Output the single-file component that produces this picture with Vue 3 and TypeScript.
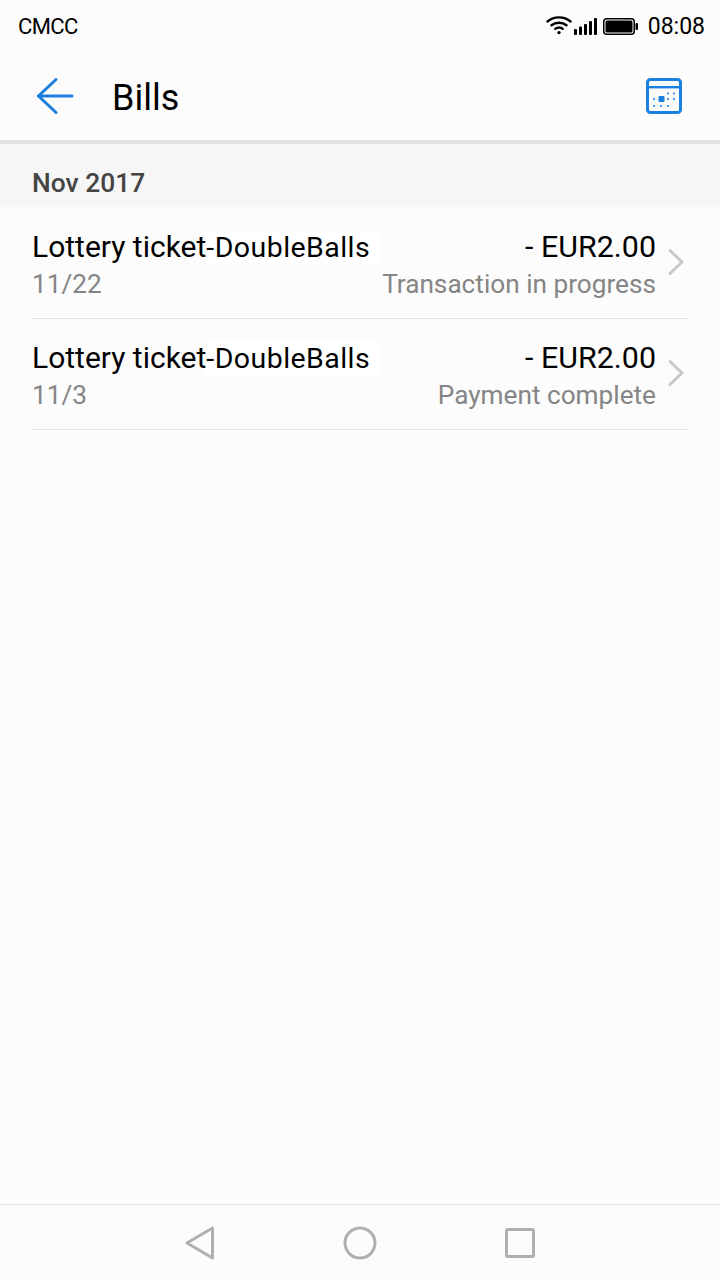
<script setup lang="ts">
interface Bill {
  name: string
  suffix: string
  date: string
  amount: string
  status: string
}

const bills: Bill[] = [
  { name: 'Lottery ticket', suffix: '-DoubleBalls', date: '11/22', amount: '- EUR2.00', status: 'Transaction in progress' },
  { name: 'Lottery ticket', suffix: '-DoubleBalls', date: '11/3', amount: '- EUR2.00', status: 'Payment complete' }
]
</script>

<template>
  <div class="screen">
    <div class="status-bar">
      <span class="carrier">CMCC</span>
      <div class="status-right">
        <svg class="wifi" width="26" height="20" viewBox="0 0 26 20" fill="none" stroke="#000" stroke-width="2.4" stroke-linecap="round">
          <path d="M1.5 6.5C7.8 1 18.2 1 24.5 6.5" />
          <path d="M5.5 10.3C9.8 6.8 16.2 6.8 20.5 10.3" />
          <path d="M9.3 13.8C11.5 12.2 14.5 12.2 16.7 13.8" />
          <circle cx="13" cy="17.6" r="1.7" fill="#000" stroke="none" />
        </svg>
        <svg class="signal" width="23" height="17" viewBox="0 0 23 17" fill="#000">
          <rect x="0" y="11" width="3" height="6" rx="1" />
          <rect x="5" y="8.5" width="3" height="8.5" rx="1" />
          <rect x="10" y="6" width="3" height="11" rx="1" />
          <rect x="15" y="3" width="3" height="14" rx="1" />
          <rect x="20" y="0" width="3" height="17" rx="1" />
        </svg>
        <svg class="battery" width="35" height="17" viewBox="0 0 35 17">
          <rect x="0.75" y="0.75" width="30.5" height="15.5" rx="3" fill="none" stroke="#000" stroke-width="1.5" />
          <rect x="2.5" y="2.5" width="27" height="12" rx="1.5" fill="#000" />
          <rect x="32.5" y="5" width="2.5" height="7" rx="1" fill="#000" />
        </svg>
        <span class="clock">08:08</span>
      </div>
    </div>

    <header class="title-bar">
      <svg class="back" width="38" height="38" viewBox="0 0 38 38" fill="none" stroke="#1a7fe0" stroke-width="3" stroke-linecap="round" stroke-linejoin="round">
        <path d="M36 19H2.5" />
        <path d="M20 2.5L2.5 19L20 35.5" />
      </svg>
      <h1 class="title">Bills</h1>
      <svg class="calendar" width="36" height="36" viewBox="0 0 36 36" fill="#1a7fe0">
        <rect x="1.5" y="1.5" width="33" height="33" rx="3" fill="none" stroke="#1a7fe0" stroke-width="3" />
        <rect x="1.5" y="8" width="33" height="2.4" />
        <rect x="12.5" y="18" width="6" height="6" rx="1" />
        <g opacity="0.8">
          <rect x="7" y="20" width="2" height="2" />
          <rect x="21" y="20" width="2" height="2" />
          <rect x="21" y="14.5" width="2" height="2" />
          <rect x="27" y="14.5" width="2" height="2" />
          <rect x="27" y="20" width="2" height="2" />
          <rect x="7" y="27" width="2" height="2" />
          <rect x="14" y="27" width="2" height="2" />
          <rect x="21" y="27" width="2" height="2" />
        </g>
      </svg>
    </header>

    <div class="month">Nov 2017</div>

    <main class="list">
      <div v-for="(bill, i) in bills" :key="i" class="row">
        <div class="row-body">
          <div class="line">
            <span class="name">{{ bill.name }}<span class="suffix">{{ bill.suffix }}</span></span>
            <span class="amount">{{ bill.amount }}</span>
          </div>
          <div class="line sub">
            <span>{{ bill.date }}</span>
            <span>{{ bill.status }}</span>
          </div>
        </div>
        <svg class="chevron" width="18" height="28" viewBox="0 0 18 28" fill="none" stroke="#c8c8c8" stroke-width="3" stroke-linecap="round" stroke-linejoin="round">
          <path d="M3 2.5L15 14L3 25.5" />
        </svg>
      </div>
    </main>

    <nav class="nav-bar">
      <div class="nav-slot">
        <svg width="30" height="34" viewBox="0 0 30 34" fill="none" stroke="#b0b0b0" stroke-width="3" stroke-linejoin="round">
          <path d="M27.5 2L2 17L27.5 32Z" />
        </svg>
      </div>
      <div class="nav-slot">
        <svg width="34" height="34" viewBox="0 0 34 34" fill="none" stroke="#b0b0b0" stroke-width="3">
          <circle cx="17" cy="17" r="15" />
        </svg>
      </div>
      <div class="nav-slot">
        <svg width="30" height="30" viewBox="0 0 30 30" fill="none" stroke="#b0b0b0" stroke-width="3" stroke-linejoin="round">
          <rect x="1.5" y="1.5" width="27" height="27" rx="1.5" />
        </svg>
      </div>
    </nav>
  </div>
</template>

<style>
body {
  background: #fcfcfc;
}
</style>

<style scoped>
.screen {
  width: 720px;
  height: 1280px;
  display: flex;
  flex-direction: column;
  background: #fcfcfc;
  font-family: Roboto, "Liberation Sans", sans-serif;
  overflow: hidden;
}

.status-bar {
  height: 52px;
  flex: none;
  display: flex;
  align-items: center;
  justify-content: space-between;
  padding: 0 15px 0 18px;
  box-sizing: border-box;
  color: #000;
  font-size: 23px;
}

.carrier {
  font-size: 22px;
  letter-spacing: -0.6px;
}

.status-right {
  display: flex;
  align-items: center;
}

.wifi {
  margin-right: 2px;
  margin-bottom: 2px;
}

.signal {
  margin-right: 6px;
}

.battery {
  margin-right: 10px;
}

.title-bar {
  height: 88px;
  flex: none;
  display: flex;
  align-items: center;
  padding: 0 38px 0 36px;
}

.title {
  flex: 1;
  margin: 4px 0 0 38px;
  font-size: 36px;
  font-weight: 400;
  color: #000;
}

.month {
  height: 67px;
  flex: none;
  box-sizing: border-box;
  border-top: 4px solid #e2e2e2;
  background: #f6f6f6;
  padding: 23px 32px 0;
  font-size: 26.4px;
  line-height: 32px;
  font-weight: 500;
  color: #444;
}

.list {
  flex: 1;
  padding: 1px 32px 0;
}

.row {
  height: 111px;
  display: flex;
  align-items: center;
  box-sizing: border-box;
  border-bottom: 1px solid #e4e4e4;
}

.row-body {
  flex: 1;
  min-width: 0;
  padding: 4px 1px 0 0;
}

.line {
  display: flex;
  justify-content: space-between;
  font-size: 30px;
  line-height: 34px;
  color: #000;
}

.suffix {
  display: inline-block;
  padding-right: 9px;
  font-size: 28.5px;
  letter-spacing: 0.45px;
  background: #fff;
}

.amount {
  flex: none;
  font-size: 30.4px;
}

.sub {
  margin-top: 3px;
  font-size: 26.2px;
  line-height: 32px;
  color: #858585;
}

.chevron {
  flex: none;
  margin: 0 3px 2px 10px;
}

.nav-bar {
  height: 76px;
  flex: none;
  box-sizing: border-box;
  border-top: 1px solid #e2e2e2;
  display: flex;
  align-items: center;
  justify-content: center;
}

.nav-slot {
  width: 160px;
  display: flex;
  justify-content: center;
}
</style>
